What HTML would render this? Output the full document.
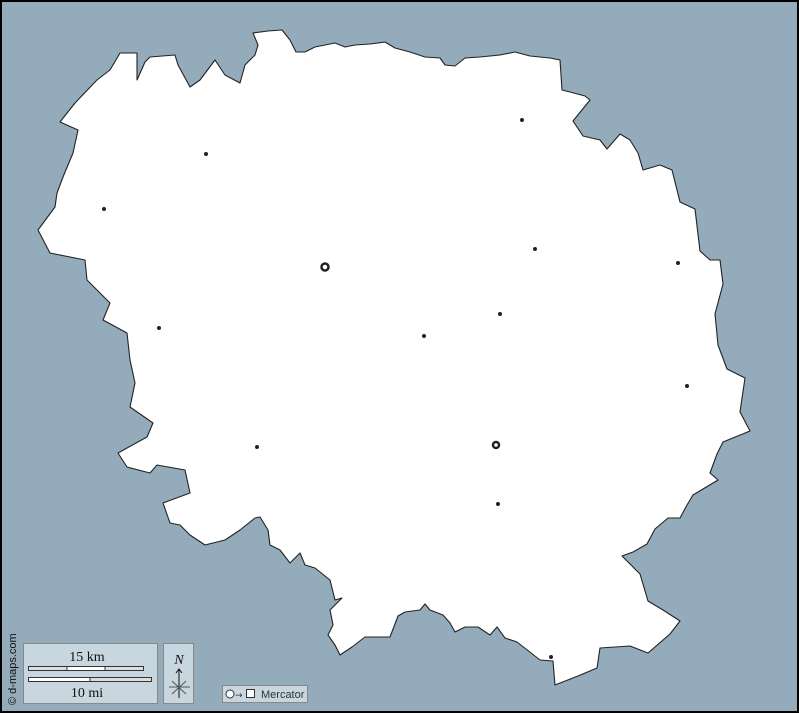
<!DOCTYPE html>
<html><head><meta charset="utf-8"><style>
html,body{margin:0;padding:0;}
body{width:799px;height:713px;overflow:hidden;background:#000;}
</style></head><body>
<svg width="799" height="713" viewBox="0 0 799 713" xmlns="http://www.w3.org/2000/svg" style="display:block">
<rect x="0" y="0" width="799" height="713" fill="#000"/>
<rect x="2" y="2" width="795" height="709" fill="#94abbc"/>
<polygon fill="#fff" stroke="#222" stroke-width="1.1" stroke-linejoin="round" points="253,33 268,31 282,30 290,40 296,52 305,52 315,47 335,43 345,47 355,45 370,44 385,42 395,48 410,52 425,57 440,58 445,65 455,66 465,58 480,57 500,55 515,52 530,56 550,58 560,60 562,90 570,92 585,96 590,100 573,121 583,136 600,140 607,149 620,134 630,140 638,153 643,170 660,165 672,170 680,202 695,209 700,251 710,260 720,260 723,284 715,314 718,345 727,369 745,378 740,412 750,431 723,442 717,454 710,473 718,480 693,495 687,505 680,518 668,518 655,529 647,544 633,552 622,556 640,574 648,601 663,610 680,621 670,634 648,653 630,646 600,648 597,668 578,676 555,685 553,661 540,660 517,642 505,638 497,627 490,635 478,627 465,627 455,632 450,623 443,615 430,610 425,604 420,610 405,612 398,616 390,637 378,637 365,637 352,647 340,655 335,645 328,635 333,625 330,610 342,598 335,600 330,580 315,568 305,565 300,553 290,563 280,550 270,545 268,530 260,517 255,518 240,530 225,540 205,545 190,535 180,525 170,523 163,503 190,493 185,470 157,465 150,473 127,467 118,453 147,437 153,423 130,407 135,383 130,360 127,333 103,320 110,303 87,280 85,260 50,253 38,230 55,207 57,193 63,177 73,153 78,130 60,122 75,103 97,80 110,70 120,53 137,53 137,80 145,62 150,57 175,55 178,65 190,87 200,80 215,60 225,75 240,83 245,65 255,55 258,45"/>
<g fill="#222">
<circle cx="522" cy="120" r="2"/><circle cx="206" cy="154" r="2"/><circle cx="104" cy="209" r="2"/>
<circle cx="535" cy="249" r="2"/><circle cx="678" cy="263" r="2"/><circle cx="159" cy="328" r="2"/>
<circle cx="500" cy="314" r="2"/><circle cx="424" cy="336" r="2"/><circle cx="687" cy="386" r="2"/>
<circle cx="257" cy="447" r="2"/><circle cx="498" cy="504" r="2"/><circle cx="551" cy="657" r="2"/>
</g>
<circle cx="325" cy="267" r="3.5" fill="none" stroke="#222" stroke-width="2.5"/>
<circle cx="496" cy="445" r="3" fill="none" stroke="#222" stroke-width="2.5"/>
<rect x="23.5" y="643.5" width="134" height="60" fill="#c8d6df" stroke="#888"/>
<text x="87" y="661" font-family="Liberation Serif" font-size="14" text-anchor="middle" fill="#111">15 km</text>
<rect x="28.5" y="666.5" width="115" height="4" fill="#ddd" stroke="#333"/>
<rect x="67" y="667" width="38" height="3" fill="#fff"/>
<line x1="67" y1="666" x2="67" y2="671" stroke="#333"/><line x1="105" y1="666" x2="105" y2="671" stroke="#333"/>
<rect x="28.5" y="677.5" width="123" height="4" fill="#ddd" stroke="#333"/>
<rect x="29" y="678" width="61" height="3" fill="#fff"/>
<line x1="90" y1="677" x2="90" y2="682" stroke="#333"/>
<text x="87" y="697" font-family="Liberation Serif" font-size="14" text-anchor="middle" fill="#111">10 mi</text>
<rect x="163.5" y="643.5" width="30" height="60" fill="#c8d6df" stroke="#888"/>
<text x="179" y="664" font-family="Liberation Serif" font-style="italic" font-size="14" text-anchor="middle" fill="#111">N</text>
<line x1="179" y1="670" x2="179" y2="698" stroke="#111"/>
<path d="M176,673 L179,669 L182,673" fill="none" stroke="#111"/>
<line x1="169" y1="687" x2="190" y2="687" stroke="#555"/>
<line x1="172" y1="681" x2="186" y2="694" stroke="#555"/><line x1="186" y1="681" x2="172" y2="694" stroke="#555"/>
<rect x="222.5" y="685.5" width="85" height="17" fill="#c8d6df" stroke="#888"/>
<circle cx="230" cy="694" r="4" fill="#fff" stroke="#333"/>
<text x="235" y="698" font-family="DejaVu Sans" font-size="9" fill="#333">→</text>
<rect x="246.5" y="689.5" width="8" height="8" fill="#fff" stroke="#333"/>
<text x="261" y="698" font-family="Liberation Sans" font-size="11" fill="#333">Mercator</text>
<text transform="translate(16,705) rotate(-90)" font-family="Liberation Sans" font-size="11" fill="#111">© d-maps.com</text>
</svg>
</body></html>
